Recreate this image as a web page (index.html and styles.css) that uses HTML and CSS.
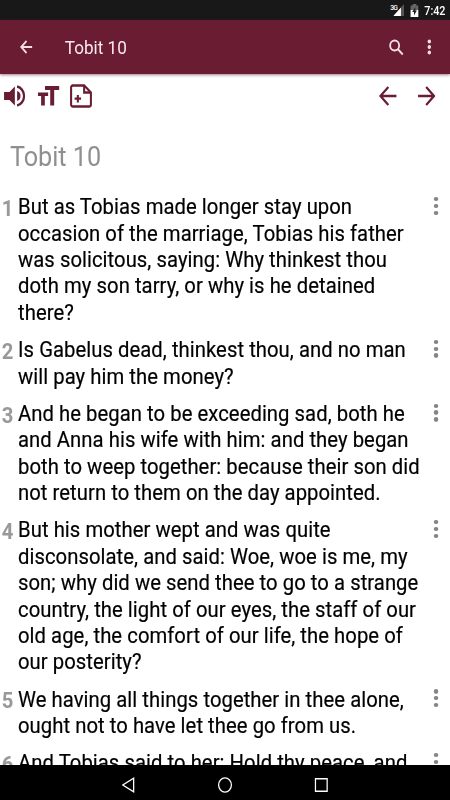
FILE: index.html
```html
<!DOCTYPE html>
<html lang="en">
<head>
<meta charset="utf-8">
<title>Tobit 10</title>
<link rel="stylesheet" href="styles.css">
</head>
<body>
<div class="device">
<div class="screen">
  <div class="status">
    <span class="net">3G</span>
    <svg class="signal" width="12" height="12" viewBox="0 0 12 12"><path d="M12 0V12H0z" fill="#555"/><path d="M8.500 3.500V12H0z" fill="#fff"/></svg>
    <svg class="battery" width="9" height="13" viewBox="0 0 9 13"><path d="M2.500 0h4v1.500H9V13H0V1.500h2.500z" fill="#666"/><path d="M0 6h9v7H0z" fill="#fff"/><path d="M5.500 3L2 8h2v3.500L7.200 6.500H5.500z" fill="#222"/></svg>
    <span class="time">7:42</span>
  </div>
  <header class="appbar">
    <svg class="back" width="14" height="14" viewBox="0 0 14 14" fill="none" stroke="#f7dfe5" stroke-width="1.800"><path d="M14 7H1.500M7.500 1L1.500 7L7.500 13"/></svg>
    <h1 class="title">Tobit 10</h1>
    <svg class="search" width="17" height="17" viewBox="0 0 17 17" fill="none" stroke="#f7dfe5" stroke-width="2"><circle cx="6.500" cy="6.500" r="5"/><path d="M10.200 10.200L15.500 15.500"/></svg>
    <svg class="more" width="6" height="16" viewBox="0 0 6 16" fill="#f7dfe5"><circle cx="3" cy="2.500" r="1.900"/><circle cx="3" cy="8" r="1.900"/><circle cx="3" cy="13.500" r="1.900"/></svg>
  </header>
  <div class="tools">
    <svg class="speaker" width="24" height="24" viewBox="0 0 24 24"><path d="M.5 8H6.500L12.500 2.500v19L6.500 16H.5z" fill="#691c32"/><path d="M15 7v10a5.200 5.200 0 0 0 0-10z" fill="#691c32"/><path d="M15 2.500a9.700 9.700 0 0 1 0 19" fill="none" stroke="#691c32" stroke-width="2.500"/></svg>
    <svg class="size" width="24" height="20" viewBox="0 0 24 20" fill="#691c32"><path d="M8 0h16v4h-5.800v15.500h-4.400V4H8zM0 6.500h11.500v3.600H7.800v9.400H3.700v-9.400H0z"/></svg>
    <svg class="note" width="26" height="24" viewBox="0 0 26 24" fill="none" stroke="#691c32"><path d="M3 1.500h13.500L24 8.500v12q0 2-2 2H4q-2 0-2-2v-17q0-2 2-2z" stroke-width="2.300"/><path d="M16.500 1.500v7H24" stroke-width="2.300"/><path d="M9.500 11v7.500M5.900 14.700h7.200" stroke-width="2.300"/></svg>
    <svg class="prev" width="20" height="20" viewBox="0 0 20 20" fill="none" stroke="#691c32" stroke-width="2.500"><path d="M19.500 10H2M10.500 1L1.800 10L10.500 19"/></svg>
    <svg class="next" width="20" height="20" viewBox="0 0 20 20" fill="none" stroke="#691c32" stroke-width="2.500"><path d="M.5 10H18M9.500 1L18.200 10L9.500 19"/></svg>
  </div>
  <main class="reader">
    <h2 class="chapter">Tobit 10</h2>
    <div class="verse"><b class="num">1</b><p class="text">But as Tobias made longer stay upon<br>occasion of the marriage, Tobias his father<br>was solicitous, saying: Why thinkest thou<br>doth my son tarry, or why is he detained<br>there?</p><span class="dots"><i></i><i></i><i></i></span></div>
    <div class="verse"><b class="num">2</b><p class="text">Is Gabelus dead, thinkest thou, and no man<br>will pay him the money?</p><span class="dots"><i></i><i></i><i></i></span></div>
    <div class="verse"><b class="num">3</b><p class="text">And he began to be exceeding sad, both he<br>and Anna his wife with him: and they began<br>both to weep together: because their son did<br>not return to them on the day appointed.</p><span class="dots"><i></i><i></i><i></i></span></div>
    <div class="verse"><b class="num">4</b><p class="text">But his mother wept and was quite<br>disconsolate, and said: Woe, woe is me, my<br>son; why did we send thee to go to a strange<br>country, the light of our eyes, the staff of our<br>old age, the comfort of our life, the hope of<br>our posterity?</p><span class="dots"><i></i><i></i><i></i></span></div>
    <div class="verse"><b class="num">5</b><p class="text">We having all things together in thee alone,<br>ought not to have let thee go from us.</p><span class="dots"><i></i><i></i><i></i></span></div>
    <div class="verse"><b class="num">6</b><p class="text">And Tobias said to her: Hold thy peace, and</p><span class="dots"><i></i><i></i><i></i></span></div>
  </main>
  <nav class="nav">
    <svg width="16" height="16" viewBox="0 0 16 16" fill="none" stroke="#fff" stroke-width="1.400"><path d="M13.500 1.200V14.800L1.500 8z"/></svg>
    <svg width="16" height="16" viewBox="0 0 16 16" fill="none" stroke="#fff" stroke-width="1.400"><circle cx="8" cy="8" r="7.100"/></svg>
    <svg width="16" height="16" viewBox="0 0 16 16" fill="none" stroke="#fff" stroke-width="1.400"><path d="M1.500 1.700h13v12.600h-13z"/></svg>
  </nav>
</div>
</div>
</body>
</html>
```
FILE: styles.css
```css
* { box-sizing: border-box; margin: 0; padding: 0; }
body { background: #fff; }
svg { display: block; flex: none; }

.device { width: 450px; height: 800px; overflow: hidden; }

/* The 500px wide layout is condensed to the 450px viewport. */
.screen {
  width: 500px;
  height: 800px;
  display: flex;
  flex-direction: column;
  font-family: Roboto, "Liberation Sans", sans-serif;
  transform: scaleX(.9);
  transform-origin: 0 0;
}

.status {
  flex: none;
  height: 20px;
  background: #181818;
  color: #fff;
  display: flex;
  justify-content: flex-end;
  align-items: flex-start;
  padding-right: 5px;
}
.net { font-size: 7.500px; line-height: 9px; font-weight: 500; letter-spacing: -.8px; margin-top: 3px; }
.signal { margin-top: 4px; margin-left: -4px; }
.battery { margin: 4px 6px 0 7px; }
.time { font-size: 12px; line-height: 20px; font-weight: 500; margin-top: 1px; }

.appbar {
  flex: none;
  height: 54px;
  background: #691c32;
  display: flex;
  align-items: center;
  padding: 0 20px 0 22px;
  box-shadow: 0 1px 3px rgba(105, 28, 50, .6);
}
.title { flex: 1; margin-left: 36px; font-size: 19px; font-weight: 400; line-height: 24px; color: #fbe9ee; padding-top: 2px; }
.more { margin-left: 25px; }

.tools {
  flex: none;
  height: 44px;
  display: flex;
  align-items: center;
  padding: 0 16px 0 4px;
}
.size { margin-left: 14px; }
.note { margin-left: 11px; }
.prev { margin-left: auto; }
.next { margin-left: 23px; }

.reader { flex: 1; min-height: 0; overflow: hidden; }
.chapter { padding: 22px 0 0 11px; height: 76px; font-size: 28px; font-weight: 400; line-height: 34px; color: #8f8f8f; }
.verse { display: flex; align-items: flex-start; margin-bottom: 11px; font-size: 22.500px; line-height: 26.370px; color: #000; }
.num { flex: none; width: 20px; padding-left: 2px; font-weight: 700; color: #999; position: relative; top: 1px; }
.text { flex: 1; white-space: nowrap; letter-spacing: .055px; -webkit-text-stroke: .2px #000; position: relative; top: -.7px; }
.dots { flex: none; width: 5px; margin: 3px 13px 0 0; display: grid; gap: 2.500px; }
.dots i { height: 4.300px; width: 5px; border-radius: 50%; background: #858585; }

.nav {
  flex: none;
  height: 35px;
  background: #000;
  display: flex;
  justify-content: center;
  align-items: center;
  gap: 91px;
  padding-top: 5px;
}
```
